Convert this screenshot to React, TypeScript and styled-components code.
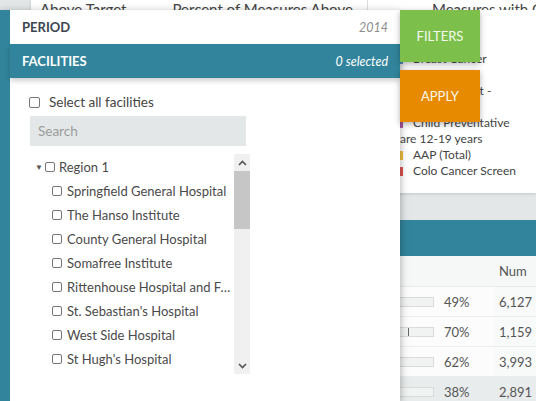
import React from "react";
import styled, { createGlobalStyle } from "styled-components";

const GlobalStyle = createGlobalStyle`
  html, body { margin: 0; padding: 0; }
  body {
    width: 536px;
    height: 401px;
    overflow: hidden;
    font-family: "Lato", "Liberation Sans", sans-serif;
    background: #e4e7e7;
  }
  * { box-sizing: border-box; }
`;

const TEAL = "#31849b";

const Page = styled.div`
  position: relative;
  width: 536px;
  height: 401px;
  overflow: hidden;
  display: grid;
  grid-template-columns: 31px 1fr;
`;

const Gutter = styled.div`
  background: #e4e7e7;
`;

const Main = styled.div`
  display: flex;
  flex-direction: column;
  background: #e4e7e7;
  min-width: 0;
`;

const SummaryCard = styled.div`
  background: #fff;
  height: 193px;
  display: flex;
  flex-direction: column;
  box-shadow: 0 1px 3px rgba(0, 0, 0, 0.15);
`;

const HeaderRow = styled.div`
  height: 10px;
  overflow: hidden;
  display: grid;
  grid-template-columns: 336px 1fr;
  align-items: end;
  font-size: 15px;
  line-height: 18px;
  color: #444;
`;

const HeaderCell = styled.div<{ $pad: number; $divider?: boolean }>`
  padding-left: ${(p) => p.$pad}px;
  white-space: nowrap;
  overflow: hidden;
  display: flex;
  gap: 46px;
  height: 18px;
  border-left: ${(p) => (p.$divider ? "1px solid #ddd" : "none")};
`;

const SummaryBody = styled.div`
  flex: 1;
  display: grid;
  grid-template-columns: 336px 1fr;
`;

const Legend = styled.ul`
  list-style: none;
  margin: 0;
  padding: 41px 0 0 28px;
  font-size: 12px;
  line-height: 16px;
  color: #444;
  display: flex;
  flex-direction: column;
`;

const LegendItem = styled.li`
  display: grid;
  grid-template-columns: 8px 1fr;
  column-gap: 10px;
  white-space: nowrap;
`;

const Swatch = styled.span<{ $color: string }>`
  width: 5px;
  height: 9px;
  margin-left: 3px;
  margin-top: 4px;
  background: ${(p) => p.$color};
`;

const LegendText = styled.span`
  display: flex;
  flex-direction: column;
`;

const Wrapped = styled.span`
  margin-left: -21px;
`;

const TableCard = styled.div`
  margin-top: 27px;
  background: #fff;
  display: flex;
  flex-direction: column;
`;

const TableTitle = styled.div`
  height: 36px;
  background: ${TEAL};
`;

const TableGrid = styled.div`
  display: grid;
  grid-template-columns: 1fr 150px 54px 42px;
  font-size: 13px;
  color: #555;
`;

const HeadCell = styled.div`
  height: 31px;
  background: #f6f7f7;
  display: flex;
  align-items: center;
  padding-left: 5px;
  border-bottom: 1px solid #e8eaea;
`;

const Cell = styled.div<{ $shade?: boolean; $num?: boolean }>`
  height: 30px;
  display: flex;
  align-items: center;
  padding-left: ${(p) => (p.$num ? 5 : 4)}px;
  border-bottom: 1px solid #eceeee;
  white-space: nowrap;
  background: ${(p) => (p.$shade ? "#e9ecec" : p.$num ? "#f8f9f9" : "#fcfcfc")};
`;

const BarCell = styled(Cell)`
  padding: 0 6px 0 6px;
  justify-content: flex-end;
`;

const Bar = styled.div`
  position: relative;
  width: 138px;
  height: 10px;
  background: #f1f2f2;
  border: 1px solid #d9dbdb;
`;

const Marker = styled.span<{ $at: number }>`
  position: absolute;
  top: 0px;
  bottom: 0px;
  width: 1px;
  background: #666;
  right: ${(p) => p.$at}px;
`;

/* ---------- Drawer ---------- */

const Drawer = styled.aside`
  position: absolute;
  left: 0;
  top: 10px;
  bottom: 0;
  width: 400px;
  background: #fff;
  border-left: 10px solid ${TEAL};
  box-shadow: 0 2px 8px rgba(0, 0, 0, 0.35);
  display: flex;
  flex-direction: column;
`;

const SectionHeader = styled.div<{ $active?: boolean }>`
  height: 34px;
  padding: 0 12px;
  display: flex;
  align-items: center;
  justify-content: space-between;
  background: ${(p) => (p.$active ? TEAL : "#fff")};
  color: ${(p) => (p.$active ? "#fff" : "#3b4650")};
  box-shadow: ${(p) => (p.$active ? "0 3px 5px rgba(0,0,0,0.18)" : "none")};
  position: relative;
`;

const SectionTitle = styled.span`
  font-weight: 700;
  font-size: 13px;
`;

const SectionValue = styled.span<{ $active?: boolean }>`
  font-style: italic;
  font-size: 12.5px;
  color: ${(p) => (p.$active ? "#fff" : "#8c8c8c")};
`;

const DrawerBody = styled.div`
  padding: 14px 0 0 19px;
  display: flex;
  flex-direction: column;
  color: #4a4a4a;
`;

const SelectAll = styled.label`
  height: 20px;
  display: flex;
  align-items: center;
  gap: 9px;
  font-size: 13.5px;
  color: #444;
`;

const Box = styled.span<{ $size?: number }>`
  width: ${(p) => p.$size ?? 10}px;
  height: ${(p) => p.$size ?? 10}px;
  border: 1px solid #767676;
  border-radius: 2px;
  background: #fff;
  flex: none;
`;

const SearchInput = styled.input`
  margin: 4px 0 0 1px;
  width: 216px;
  height: 30px;
  border: none;
  outline: none;
  background: #e4e7e7;
  padding: 0 8px;
  font-family: inherit;
  font-size: 13.5px;
  color: #444;
  &::placeholder { color: #9a9c9c; }
`;

const TreeBox = styled.div`
  margin: 8px 0 0 1px;
  width: 220px;
  height: 220px;
  display: grid;
  grid-template-columns: 204px 16px;
`;

const TreeList = styled.ul`
  list-style: none;
  margin: 0;
  padding: 1px 0 0 5px;
  overflow: hidden;
  font-size: 13px;
  color: #4a4a4a;
`;

const TreeRow = styled.li<{ $indent: number; $gap: number }>`
  height: 24px;
  display: flex;
  align-items: center;
  gap: ${(p) => p.$gap}px;
  padding-left: ${(p) => p.$indent}px;
  white-space: nowrap;
  min-width: 0;
`;

const RowLabel = styled.span<{ $offset?: number }>`
  overflow: hidden;
  text-overflow: ellipsis;
  min-width: 0;
  margin-left: ${(p) => p.$offset ?? 0}px;
`;

const Caret = styled.span`
  width: 7px;
  font-size: 8px;
  color: #555;
  margin-right: 3px;
`;

const Track = styled.div`
  background: #f0f0f0;
  display: grid;
  grid-template-rows: 17px 58px 1fr 17px;
`;

const Arrow = styled.div`
  display: flex;
  align-items: center;
  justify-content: center;
`;

const Thumb = styled.div`
  background: #c6c6c6;
`;

const ButtonStack = styled.div`
  position: absolute;
  left: 400px;
  top: 10px;
  display: flex;
  flex-direction: column;
  gap: 8px;
`;

const ActionButton = styled.button<{ $color: string }>`
  width: 80px;
  height: 52px;
  border: none;
  background: ${(p) => p.$color};
  color: #f4f8ee;
  font-family: inherit;
  font-size: 13px;
  box-shadow: 0 2px 6px rgba(0, 0, 0, 0.3);
  padding: 0;
`;

const Chevron = ({ up }: { up?: boolean }) => (
  <svg width="9" height="6" viewBox="0 0 9 6">
    <path
      d={up ? "M1 5 L4.5 1.5 L8 5" : "M1 1 L4.5 4.5 L8 1"}
      fill="none"
      stroke="#555"
      strokeWidth="1.6"
    />
  </svg>
);

const hospitals = [
  "Springfield General Hospital",
  "The Hanso Institute",
  "County General Hospital",
  "Somafree Institute",
  "Rittenhouse Hospital and Free Clinic",
  "St. Sebastian's Hospital",
  "West Side Hospital",
  "St Hugh's Hospital",
];

const rows = [
  { pct: "49%", num: "6,127", marker: null as number | null },
  { pct: "70%", num: "1,159", marker: 24 },
  { pct: "62%", num: "3,993", marker: null },
  { pct: "38%", num: "2,891", marker: null, shade: true },
];

export default function App() {
  return (
    <>
      <GlobalStyle />
      <Page>
        <Gutter />
        <Main>
          <SummaryCard>
            <HeaderRow>
              <HeaderCell $pad={9}>
                <span>Above Target</span>
                <span>Percent of Measures Above</span>
              </HeaderCell>
              <HeaderCell $pad={64} $divider>
                <span>Measures with Goals</span>
              </HeaderCell>
            </HeaderRow>
            <SummaryBody>
              <div />
              <Legend>
                <LegendItem>
                  <Swatch $color="#5b9bd5" />
                  <LegendText>
                    <span>Breast Cancer</span>
                    <span>Screening</span>
                  </LegendText>
                </LegendItem>
                <LegendItem>
                  <Swatch $color="#70ad47" />
                  <LegendText>
                    <span>BP Treatment -</span>
                    <span>Adults</span>
                  </LegendText>
                </LegendItem>
                <LegendItem>
                  <Swatch $color="#b15ca6" />
                  <LegendText>
                    <span>Child Preventative</span>
                    <Wrapped>Care 12-19 years</Wrapped>
                  </LegendText>
                </LegendItem>
                <LegendItem>
                  <Swatch $color="#efbf3f" />
                  <LegendText>
                    <span>AAP (Total)</span>
                  </LegendText>
                </LegendItem>
                <LegendItem>
                  <Swatch $color="#de5353" />
                  <LegendText>
                    <span>Colo Cancer Screen</span>
                  </LegendText>
                </LegendItem>
              </Legend>
            </SummaryBody>
          </SummaryCard>
          <TableCard>
            <TableTitle />
            <TableGrid>
              <HeadCell>Measure</HeadCell>
              <HeadCell />
              <HeadCell />
              <HeadCell>Num</HeadCell>
              {rows.map((r, i) => (
                <React.Fragment key={i}>
                  <Cell $shade={r.shade}>Measure {i + 1}</Cell>
                  <BarCell $shade={r.shade}>
                    <Bar>{r.marker !== null && <Marker $at={r.marker} />}</Bar>
                  </BarCell>
                  <Cell $shade={r.shade}>{r.pct}</Cell>
                  <Cell $shade={r.shade} $num>
                    {r.num}
                  </Cell>
                </React.Fragment>
              ))}
            </TableGrid>
          </TableCard>
        </Main>

        <Drawer>
          <SectionHeader>
            <SectionTitle>PERIOD</SectionTitle>
            <SectionValue>2014</SectionValue>
          </SectionHeader>
          <SectionHeader $active>
            <SectionTitle>FACILITIES</SectionTitle>
            <SectionValue $active>0 selected</SectionValue>
          </SectionHeader>
          <DrawerBody>
            <SelectAll>
              <Box $size={11} />
              Select all facilities
            </SelectAll>
            <SearchInput placeholder="Search" />
            <TreeBox>
              <TreeList>
                <TreeRow $indent={0} $gap={0}>
                  <Caret>▼</Caret>
                  <Box />
                  <RowLabel $offset={4}>Region 1</RowLabel>
                </TreeRow>
                {hospitals.map((h) => (
                  <TreeRow key={h} $indent={17} $gap={5}>
                    <Box />
                    <RowLabel>{h}</RowLabel>
                  </TreeRow>
                ))}
              </TreeList>
              <Track>
                <Arrow>
                  <Chevron up />
                </Arrow>
                <Thumb />
                <div />
                <Arrow>
                  <Chevron />
                </Arrow>
              </Track>
            </TreeBox>
          </DrawerBody>
        </Drawer>

        <ButtonStack>
          <ActionButton $color="#7cc04b">FILTERS</ActionButton>
          <ActionButton $color="#e88a00">APPLY</ActionButton>
        </ButtonStack>
      </Page>
    </>
  );
}
